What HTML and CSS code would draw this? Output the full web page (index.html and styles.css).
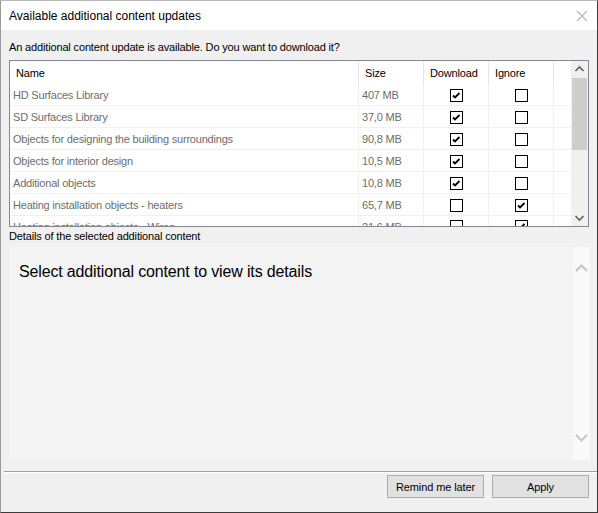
FILE: index.html
```html
<!DOCTYPE html>
<html>
<head>
<meta charset="utf-8">
<link rel="stylesheet" href="styles.css">
</head>
<body>
<div class="window">
  <div class="titlebar">
    <span class="title">Available additional content updates</span>
    <svg class="close" width="12" height="12" viewBox="0 0 12 12"><path d="M1 1 L11 11 M11 1 L1 11" stroke="#b4b4b4" stroke-width="1.1" fill="none"/></svg>
  </div>
  <div class="content">
    <div class="prompt">An additional content update is available. Do you want to download it?</div>
    <div class="listbox">
      <div class="listmain">
        <div class="hdr">
          <div class="c name">Name</div>
          <div class="c size">Size</div>
          <div class="c dl">Download</div>
          <div class="c ig">Ignore</div>
          <div class="c fill"></div>
        </div>
        <div class="rows">
          <div class="row"><div class="c name">HD Surfaces Library</div><div class="c size">407 MB</div><div class="c cb"><span class="box on"></span></div><div class="c cb"><span class="box"></span></div><div class="c fill"></div></div>
          <div class="row"><div class="c name">SD Surfaces Library</div><div class="c size">37,0 MB</div><div class="c cb"><span class="box on"></span></div><div class="c cb"><span class="box"></span></div><div class="c fill"></div></div>
          <div class="row"><div class="c name">Objects for designing the building surroundings</div><div class="c size">90,8 MB</div><div class="c cb"><span class="box on"></span></div><div class="c cb"><span class="box"></span></div><div class="c fill"></div></div>
          <div class="row"><div class="c name">Objects for interior design</div><div class="c size">10,5 MB</div><div class="c cb"><span class="box on"></span></div><div class="c cb"><span class="box"></span></div><div class="c fill"></div></div>
          <div class="row"><div class="c name">Additional objects</div><div class="c size">10,8 MB</div><div class="c cb"><span class="box on"></span></div><div class="c cb"><span class="box"></span></div><div class="c fill"></div></div>
          <div class="row"><div class="c name">Heating installation objects - heaters</div><div class="c size">65,7 MB</div><div class="c cb"><span class="box"></span></div><div class="c cb"><span class="box on"></span></div><div class="c fill"></div></div>
          <div class="row last"><div class="c name">Heating installation objects - Wires</div><div class="c size">21,6 MB</div><div class="c cb"><span class="box"></span></div><div class="c cb"><span class="box on"></span></div><div class="c fill"></div></div>
        </div>
      </div>
      <div class="vscroll">
        <svg class="arrow" width="17" height="17" viewBox="0 0 17 17"><path d="M4.5 10 L8.5 6 L12.5 10" stroke="#606060" stroke-width="1.6" fill="none"/></svg>
        <div class="track"><div class="thumb"></div></div>
        <svg class="arrow" width="17" height="17" viewBox="0 0 17 17"><path d="M4.5 7 L8.5 11 L12.5 7" stroke="#606060" stroke-width="1.6" fill="none"/></svg>
      </div>
    </div>
    <div class="dlabel">Details of the selected additional content</div>
    <div class="details">
      <div class="dtext">Select additional content to view its details</div>
      <div class="dscroll">
        <svg width="17" height="17" viewBox="0 0 17 17"><path d="M3 11 L8.5 5.5 L14 11" stroke="#c6c6c6" stroke-width="2" fill="none"/></svg>
        <svg width="17" height="17" viewBox="0 0 17 17"><path d="M3 6 L8.5 11.5 L14 6" stroke="#c6c6c6" stroke-width="2" fill="none"/></svg>
      </div>
    </div>
    <div class="sep"></div>
    <div class="buttons">
      <button class="btn">Remind me later</button>
      <button class="btn">Apply</button>
    </div>
  </div>
</div>
</body>
</html>
```
FILE: styles.css
```css
* { box-sizing: border-box; }
html, body { margin: 0; padding: 0; background: #f0f0f0; }
body { font-family: "Liberation Sans", Arial, sans-serif; font-size: 11px; color: #000; letter-spacing: -0.15px; }

.window {
  width: 598px;
  height: 513px;
  border-left: 1px solid #9a9a9a;
  border-right: 1px solid #3c3c3c;
  border-bottom: 1px solid #3c3c3c;
  border-top: 1px solid #b8b8b8;
  display: flex;
  flex-direction: column;
  background: #f0f0f0;
}

.titlebar {
  height: 29px;
  background: #fff;
  display: flex;
  align-items: center;
  justify-content: space-between;
  padding: 0 9px 0 8px;
  flex: none;
}
.title { font-size: 12px; color: #000; letter-spacing: 0; }

.content {
  flex: 1;
  display: flex;
  flex-direction: column;
  padding: 0 7px 0 3px;
}

.prompt {
  margin-top: 10px;
  padding-left: 5px;
  height: 14px;
  line-height: 14px;
}

.listbox {
  margin-top: 6px;
  margin-left: 5px;
  margin-right: 1px;
  height: 167px;
  border: 1px solid #828790;
  background: #fff;
  display: flex;
}
.listmain { flex: 1; display: flex; flex-direction: column; overflow: hidden; }
.hdr { display: flex; height: 23px; flex: none; }
.hdr .c { border-right: 1px solid #e5e5e5; line-height: 23px; padding-top: 1px; color: #000; }
.hdr .name { padding-left: 6px; }
.hdr .size { padding-left: 6px; }
.hdr .dl { padding-left: 6px; }
.hdr .ig { padding-left: 6px; }
.hdr .fill { border-right: none; }

.c { flex: none; height: 100%; white-space: nowrap; overflow: hidden; }
.name { width: 349px; }
.size { width: 65px; }
.dl, .ig, .cb { width: 65px; }
.fill { flex: 1; }

.rows { flex: 1; overflow: hidden; }
.row { display: flex; height: 22px; }
.row .c { border-right: 1px solid #f0f0f0; border-bottom: 1px solid #f0f0f0; line-height: 21px; padding-top: 1px; color: #6d6d6d; letter-spacing: -0.2px; }
.row .name { padding-left: 3px; }
.row .size { padding-left: 3px; }
.row .fill { border-right: none; }
.row .cb { display: flex; align-items: center; justify-content: center; padding-top: 1px; }
.row.last { height: 10px; overflow: hidden; align-items: flex-start; }
.row.last .c { height: 22px; line-height: 13px; padding-top: 5px; border-bottom: none; }
.row.last .cb { align-items: flex-start; padding-top: 4px; }

.box {
  width: 13px; height: 13px;
  border: 1px solid #000;
  background: #fff;
  display: block;
}
.box.on {
  background: #fff url("data:image/svg+xml,%3Csvg xmlns='http://www.w3.org/2000/svg' width='11' height='11' viewBox='0 0 11 11'%3E%3Cpath d='M2 5.5 L4 7.5 L8.5 3' stroke='%23000' stroke-width='1.8' fill='none'/%3E%3C/svg%3E") no-repeat center;
}

.vscroll {
  width: 17px;
  flex: none;
  background: #f0f0f0;
  display: flex;
  flex-direction: column;
}
.arrow { flex: none; display: block; }
.track { flex: 1; }
.thumb { margin: 0 1px; height: 72px; background: #cdcdcd; }

.dlabel {
  margin-top: 2px;
  padding-left: 5px;
  height: 14px;
  line-height: 14px;
}

.details {
  margin-top: 4px;
  margin-left: 5px;
  height: 213px;
  background: #f3f3f3;
  display: flex;
}
.dtext {
  flex: 1;
  font-size: 16px;
  padding: 16px 0 0 10px;
  color: #000;
  letter-spacing: -0.15px;
}
.dscroll {
  width: 17px;
  background: #f9f9f9;
  display: flex;
  flex-direction: column;
  justify-content: space-between;
  padding: 13px 0 14px;
}
.dscroll svg { display: block; }

.sep {
  margin-top: 11px;
  height: 2px;
  border-top: 1px solid #a0a0a0;
  border-bottom: 1px solid #fff;
  margin-right: -7px;
}

.buttons {
  margin-top: 2px;
  display: flex;
  justify-content: flex-end;
  gap: 8px;
  padding-right: 1px;
}
.btn {
  width: 97px;
  height: 23px;
  background: #e1e1e1;
  border: 1px solid #adadad;
  font-family: "Liberation Sans", Arial, sans-serif;
  font-size: 11px;
  letter-spacing: -0.1px;
  color: #000;
  padding: 0;
}
```
